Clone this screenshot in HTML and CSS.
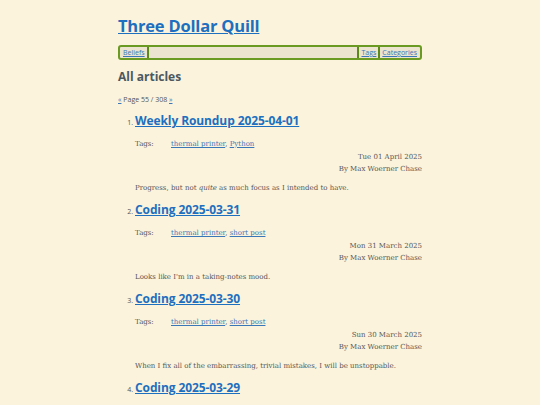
FILE: index.html
```html
<!DOCTYPE html>
<html>
<head>
<meta charset="utf-8">
<link rel="stylesheet" href="styles.css">
</head>
<body>
<div class="page">
  <h1 class="site-title"><a href="#">Three Dollar Quill</a></h1>
  <nav class="nav">
    <a href="#" class="nav-item">Beliefs</a>
    <span class="nav-spacer"></span>
    <a href="#" class="nav-item nav-sep">Tags</a>
    <a href="#" class="nav-item nav-sep">Categories</a>
  </nav>
  <h2 class="section-title">All articles</h2>
  <p class="pager"><a href="#">«</a> Page 55 / 308 <a href="#">»</a></p>
  <ol class="articles" start="1">
    <li class="article">
      <h3 class="article-title"><a href="#">Weekly Roundup 2025-04-01</a></h3>
      <div class="tags"><span class="tags-label">Tags:</span><span><a href="#">thermal printer</a>, <a href="#">Python</a></span></div>
      <div class="meta"><div>Tue 01 April 2025</div><div>By Max Woerner Chase</div></div>
      <p class="summary">Progress, but not <em>quite</em> as much focus as I intended to have.</p>
    </li>
    <li class="article">
      <h3 class="article-title"><a href="#">Coding 2025-03-31</a></h3>
      <div class="tags"><span class="tags-label">Tags:</span><span><a href="#">thermal printer</a>, <a href="#">short post</a></span></div>
      <div class="meta"><div>Mon 31 March 2025</div><div>By Max Woerner Chase</div></div>
      <p class="summary">Looks like I'm in a taking-notes mood.</p>
    </li>
    <li class="article">
      <h3 class="article-title"><a href="#">Coding 2025-03-30</a></h3>
      <div class="tags"><span class="tags-label">Tags:</span><span><a href="#">thermal printer</a>, <a href="#">short post</a></span></div>
      <div class="meta"><div>Sun 30 March 2025</div><div>By Max Woerner Chase</div></div>
      <p class="summary">When I fix all of the embarrassing, trivial mistakes, I will be unstoppable.</p>
    </li>
    <li class="article">
      <h3 class="article-title"><a href="#">Coding 2025-03-29</a></h3>
    </li>
  </ol>
</div>
</body>
</html>
```

FILE: styles.css
```css
html, body {
  margin: 0;
  padding: 0;
  background: #fbf3dc;
}
body {
  font-family: "DejaVu Serif", serif;
  color: #4a4a4a;
  font-size: 7px;
}
a {
  color: #1d6fbf;
}
.page {
  width: 304px;
  margin: 0 auto;
  padding-top: 14px;
}
.site-title {
  font-family: "Open Sans", sans-serif;
  font-weight: 700;
  font-size: 16.5px;
  letter-spacing: -0.2px;
  margin: 0 0 7px 0;
  line-height: 24px;
}
.site-title a {
  color: #1d6fbf;
}
.nav {
  display: flex;
  align-items: center;
  border: 2px solid #6b9a22;
  border-radius: 3px;
  background: #ece4cf;
  height: 11px;
  padding: 0 1px;
  font-family: "Open Sans", sans-serif;
  font-size: 7px;
}
.nav-item {
  color: #3a77b8;
  padding: 0 2px;
  line-height: 11px;
}
.nav-item:first-child {
  border-right: 2px solid #5c8a18;
}
.nav-sep {
  border-left: 2px solid #5c8a18;
}
.nav-spacer {
  flex: 1;
}
.section-title {
  font-family: "Open Sans", sans-serif;
  font-weight: 700;
  font-size: 12px;
  color: #4b5862;
  margin: 9px 0 0 0;
  line-height: 16px;
}
.pager {
  font-family: "Open Sans", sans-serif;
  font-size: 7px;
  color: #555;
  margin: 10px 0 0 0;
  line-height: 10px;
}
.pager a {
  color: #3a77b8;
}
.articles {
  margin: 7px 0 0 0;
  padding-left: 17px;
}
.article {
  font-family: "Open Sans", sans-serif;
  font-size: 7px;
  color: #555;
}
.article-title {
  font-family: "Open Sans", sans-serif;
  font-weight: 700;
  font-size: 12px;
  margin: 0;
  line-height: 18px;
  letter-spacing: -0.1px;
}
.article-title a {
  color: #1d6fbf;
}
.tags {
  display: flex;
  margin-top: 9px;
  line-height: 11px;
  font-family: "DejaVu Serif", serif;
  font-size: 7px;
}
.tags-label {
  width: 36px;
}
.tags a {
  color: #3a77b8;
}
.meta {
  text-align: right;
  font-family: "DejaVu Serif", serif;
  font-size: 7px;
  line-height: 12px;
  margin-top: 1px;
}
.summary {
  font-family: "DejaVu Serif", serif;
  font-size: 7px;
  line-height: 11px;
  margin: 8px 0 7px 0;
}
```
